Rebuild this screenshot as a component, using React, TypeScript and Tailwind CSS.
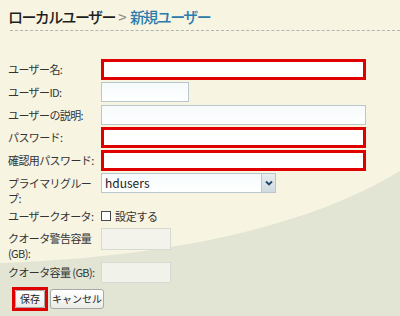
import React from 'react';

const font = { fontFamily: '"Noto Sans CJK JP", "Noto Sans", sans-serif' };

const Label = ({ children }: { children: React.ReactNode }) => (
    <div className="w-[93px] shrink-0 whitespace-nowrap text-[11px] tracking-[-0.6px] leading-[15px] text-[#333]">{children}</div>
);

const TextBox = ({ w, red, disabled }: { w: string; red?: boolean; disabled?: boolean }) => {
    if (red) {
        return <div className={`${w} h-[21px] border-[3px] border-[#e10000] bg-white`} />;
    }
    return (
        <div
            className={`${w} h-[20px] border ${
                disabled ? 'border-[#d5dad2] bg-[#f3f3ec]' : 'border-[#b8c7cc] bg-gradient-to-b from-[#f6fafb] to-white'
            }`}
        />
    );
};

export default function App() {
    return (
        <div style={font} className="relative w-[400px] h-[316px] overflow-hidden bg-[#f7f4e2]">
            {/* background swoosh */}
            <svg className="absolute inset-0" width="400" height="316" viewBox="0 0 400 316">
                <path d="M0 263 C150 258 300 232 400 171 L400 316 L0 316 Z" fill="#e2e5d4" />
            </svg>

            <div className="relative">
                <div className="pl-[8px] pt-[7px] h-[30px] text-[15px] tracking-[-1.6px] leading-[20px] whitespace-nowrap font-medium">
                    <span className="text-[#1e1e1e]">ローカルユーザー</span>
                    <span className="text-[#888] tracking-normal font-normal"> &gt; </span>
                    <span className="text-[#2a7bab]">新規ユーザー</span>
                </div>
                <div className="ml-[10px] border-t border-dashed border-[#b4b4ae]" />

                <div className="pl-[8px] pt-[28px] flex flex-col">
                    <div className="flex items-center h-[21px]">
                        <Label>ユーザー名:</Label>
                        <TextBox w="w-[265px]" red />
                    </div>
                    <div className="flex items-center h-[20px] mt-[2px]">
                        <Label>ユーザーID:</Label>
                        <TextBox w="w-[88px]" />
                    </div>
                    <div className="flex items-center h-[20px] mt-[3px]">
                        <Label>ユーザーの説明:</Label>
                        <TextBox w="w-[265px]" />
                    </div>
                    <div className="flex items-center h-[21px] mt-[2px]">
                        <Label>パスワード:</Label>
                        <TextBox w="w-[265px]" red />
                    </div>
                    <div className="flex items-center h-[21px] mt-[2px]">
                        <Label>確認用パスワード:</Label>
                        <TextBox w="w-[265px]" red />
                    </div>
                    <div className="flex items-start mt-[2px] h-[32px]">
                        <div className="pt-[3px]">
                            <Label>
                                プライマリグルー
                                <br />
                                プ:
                            </Label>
                        </div>
                        <div className="flex w-[175px] h-[20px] border border-[#b8c7cc] bg-gradient-to-b from-[#f6fafb] to-white">
                            <div className="flex-1 pl-[3px] text-[12px] leading-[18px] text-[#222]">hdusers</div>
                            <div className="w-[14px] border-l border-[#b8c7cc] bg-gradient-to-b from-[#e8eef1] to-[#cfdae0] flex items-center justify-center">
                                <svg width="8" height="6" viewBox="0 0 8 6">
                                    <path d="M1 1.5 L4 4.5 L7 1.5" stroke="#26456e" strokeWidth="1.8" fill="none" />
                                </svg>
                            </div>
                        </div>
                    </div>
                    <div className="flex items-center h-[22px]">
                        <Label>ユーザークオータ:</Label>
                        <div className="w-[10px] h-[10px] border border-[#4a4a4a] bg-white" />
                        <span className="ml-[4px] text-[11px] tracking-[-0.3px] leading-[15px] text-[#333]">設定する</span>
                    </div>
                    <div className="flex items-start h-[34px] mt-[1px]">
                        <div className="pt-[3px]">
                            <Label>
                                クオータ警告容量
                                <br />
                                (GB):
                            </Label>
                        </div>
                        <div className="w-[70px] h-[22px] border border-[#d5dad2] bg-[#f3f3ec]" />
                    </div>
                    <div className="flex items-center h-[21px]">
                        <Label>クオータ容量 (GB):</Label>
                        <div className="w-[70px] h-[21px] border border-[#d5dad2] bg-[#f1f2ea]" />
                    </div>
                    <div className="flex items-center mt-[4px] pl-[4px]">
                        <div className="border-[3px] border-[#e10000]">
                            <button className="flex items-center justify-center h-[18px] w-[30px] text-[10px] leading-none text-[#222] bg-gradient-to-b from-white to-[#ecece6] border border-[#a8a8a8] rounded-[2px]">
                                保存
                            </button>
                        </div>
                        <button className="flex items-center justify-center ml-[2px] h-[20px] w-[54px] text-[10px] leading-none text-[#222] bg-gradient-to-b from-white to-[#ecece6] border border-[#a8a8a8] rounded-[3px]">
                            キャンセル
                        </button>
                    </div>
                </div>
            </div>
        </div>
    );
}
